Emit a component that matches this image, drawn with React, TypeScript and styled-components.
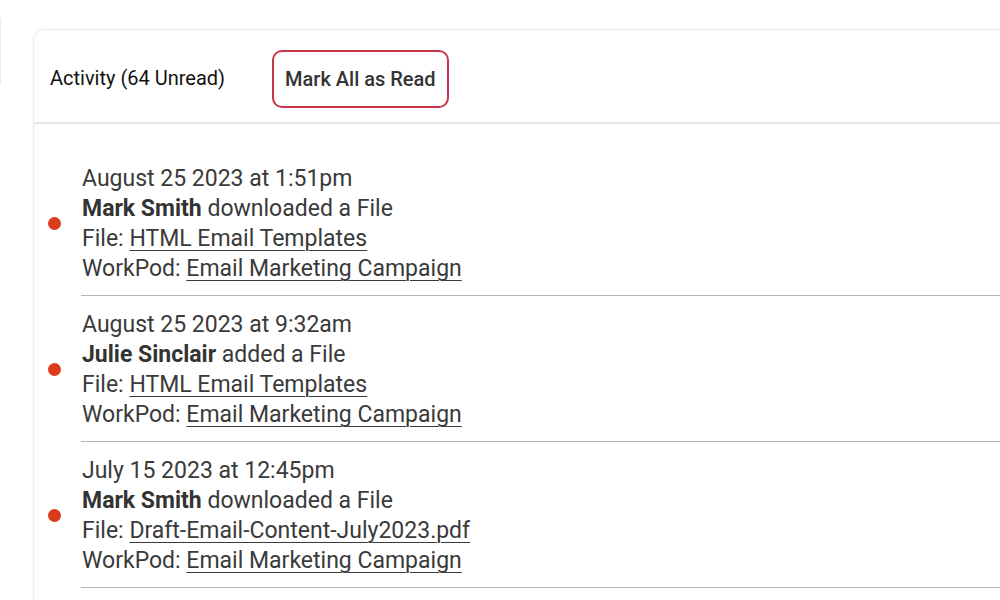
import styled, { createGlobalStyle } from "styled-components";

const GlobalStyle = createGlobalStyle`
  html, body {
    margin: 0;
    padding: 0;
    background: #ffffff;
    overflow: hidden;
    font-family: Roboto, "Noto Sans", Arial, sans-serif;
  }
`;

const Page = styled("div")`
  display: flex;
  align-items: flex-start;
  width: 1000px;
  height: 600px;
  overflow: hidden;
`;

const SideEdge = styled("div")`
  width: 1px;
  height: 66px;
  margin-top: 18px;
  background: #ececec;
  flex-shrink: 0;
`;

const Card = styled("section")`
  margin: 29px 0 0 32px;
  width: 1000px;
  min-height: 700px;
  flex-shrink: 0;
  border: 1px solid #ececec;
  border-radius: 12px;
  background: #fff;
  box-shadow: 0 0 3px rgba(0, 0, 0, 0.04);
`;

const Header = styled("header")`
  display: flex;
  align-items: center;
  gap: 47px;
  height: 92px;
  padding: 0 16px;
  border-bottom: 2px solid #e6e6e6;
`;

const Title = styled("h2")`
  margin: 3px 0 0;
  font-size: 20px;
  font-weight: 400;
  color: #111;
`;

const MarkButton = styled("button")`
  height: 58px;
  margin-top: 6px;
  padding: 0 11px;
  border: 2px solid #c9364b;
  border-radius: 10px;
  background: #fff;
  font-family: inherit;
  font-size: 20px;
  font-weight: 500;
  color: #333;
  cursor: pointer;
`;

const List = styled("ul")`
  list-style: none;
  margin: 0;
  padding: 26px 0 0;
`;

const Item = styled("li")`
  display: flex;
  align-items: center;
`;

const Dot = styled("span")<{ $unread: boolean }>`
  width: 13px;
  height: 13px;
  margin: 0 20px 0 14px;
  border-radius: 50%;
  flex-shrink: 0;
  background: ${({ $unread }) => ($unread ? "#db3a1b" : "transparent")};
`;

const Body = styled("div")`
  flex: 1;
  padding: 14px 0 11px 1px;
  border-bottom: 1px solid #b5b5b5;
  font-size: 23px;
  line-height: 30px;
  color: #3a3a3a;
`;

const Line = styled("div")`
  white-space: nowrap;
`;

const Name = styled("strong")`
  font-weight: 700;
  color: #333;
`;

const Ref = styled("a")`
  color: #3a3a3a;
  text-decoration: underline;
  text-decoration-thickness: 1px;
  text-underline-offset: 4px;
`;

type Activity = {
  when: string;
  who: string;
  action: string;
  file: string;
  workpod: string;
  unread: boolean;
};

const activities: Activity[] = [
  {
    when: "August 25 2023 at 1:51pm",
    who: "Mark Smith",
    action: "downloaded a File",
    file: "HTML Email Templates",
    workpod: "Email Marketing Campaign",
    unread: true,
  },
  {
    when: "August 25 2023 at 9:32am",
    who: "Julie Sinclair",
    action: "added a File",
    file: "HTML Email Templates",
    workpod: "Email Marketing Campaign",
    unread: true,
  },
  {
    when: "July 15 2023 at 12:45pm",
    who: "Mark Smith",
    action: "downloaded a File",
    file: "Draft-Email-Content-July2023.pdf",
    workpod: "Email Marketing Campaign",
    unread: true,
  },
];

export default function App() {
  return (
    <>
      <GlobalStyle />
      <Page>
        <SideEdge />
        <Card>
          <Header>
            <Title>Activity (64 Unread)</Title>
            <MarkButton type="button">Mark All as Read</MarkButton>
          </Header>
          <List>
            {activities.map((a, i) => (
              <Item key={i}>
                <Dot $unread={a.unread} />
                <Body>
                  <Line>{a.when}</Line>
                  <Line>
                    <Name>{a.who}</Name> {a.action}
                  </Line>
                  <Line>
                    File: <Ref href="#">{a.file}</Ref>
                  </Line>
                  <Line>
                    WorkPod: <Ref href="#">{a.workpod}</Ref>
                  </Line>
                </Body>
              </Item>
            ))}
          </List>
        </Card>
      </Page>
    </>
  );
}
